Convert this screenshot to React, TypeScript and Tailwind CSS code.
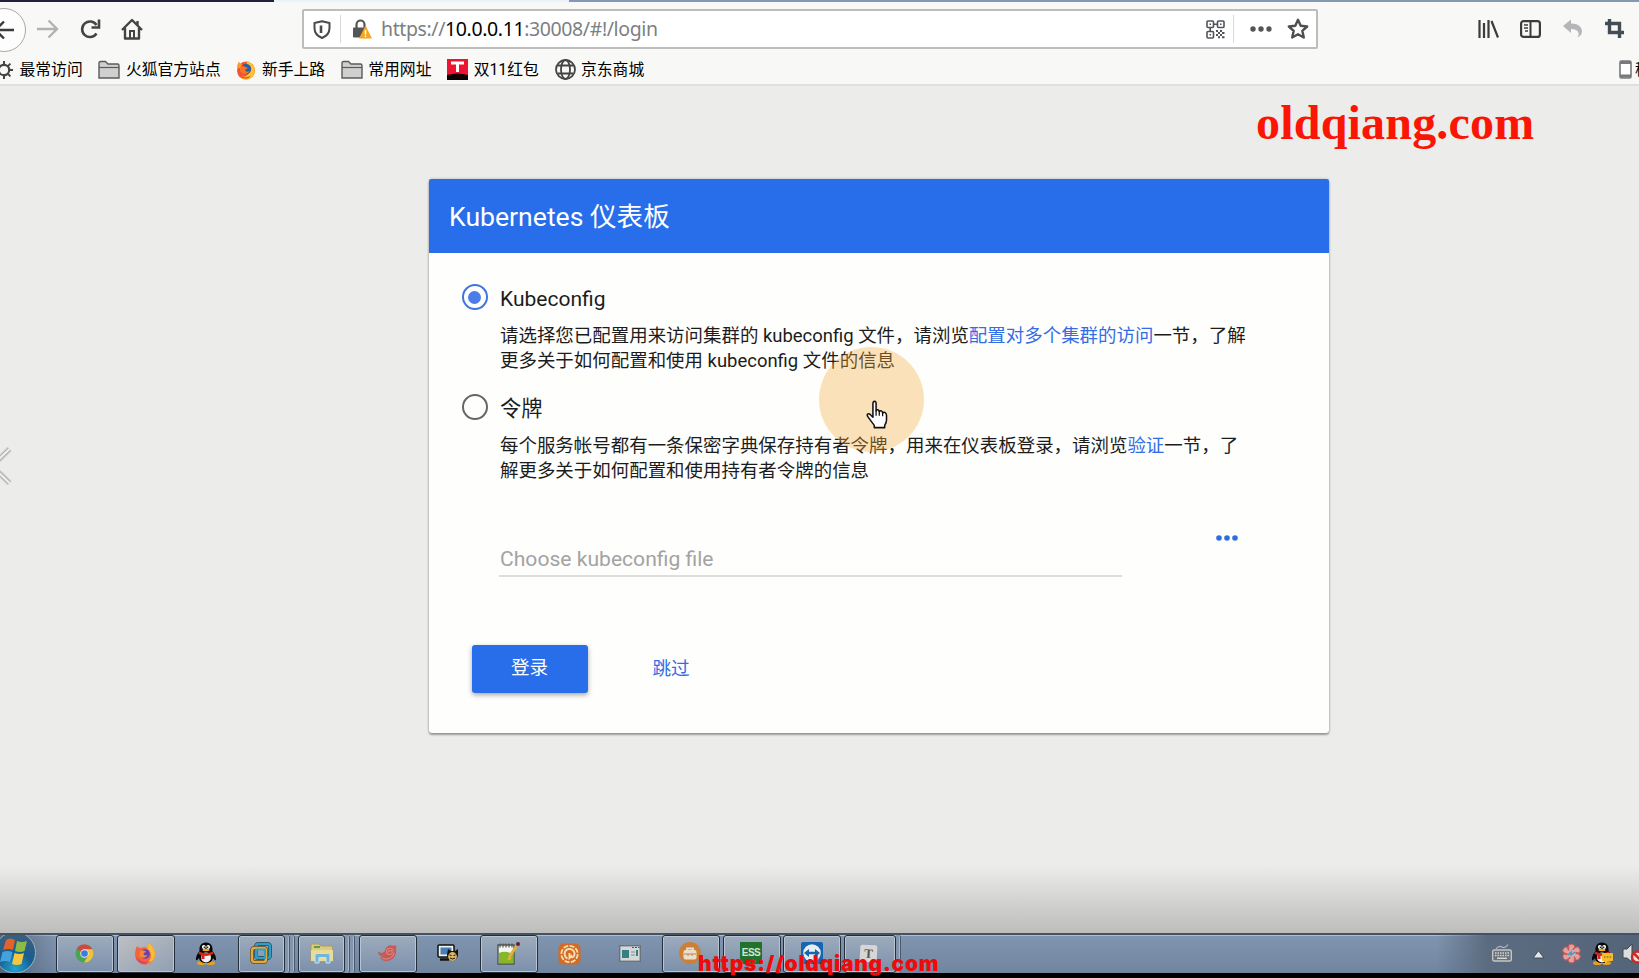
import { ReactNode } from "react";

const Folder = () => (
  <svg width="22" height="20" viewBox="0 0 22 20">
    <path
      d="M1 18V3q0-1.500 1.500-1.500H7.500L10 4H19.500Q21 4 21 5.500V18Z"
      fill="#cfcfcf"
      stroke="#5b5b5b"
      strokeWidth="1.400"
    />
    <path d="M1 7.500H21" stroke="#5b5b5b" strokeWidth="1.200" />
  </svg>
);

const Gear = () => (
  <svg width="20" height="20" viewBox="0 0 20 20" fill="none" stroke="#444">
    <circle cx="10" cy="10" r="5.200" strokeWidth="2.200" />
    <path
      d="M10 1v4M10 15v4M1 10h4M15 10h4M3.600 3.600l3 3M13.400 13.400l3 3M3.600 16.400l3-3M13.400 6.600l3-3"
      strokeWidth="2"
    />
  </svg>
);

const Firefox = () => (
  <svg width="20" height="20" viewBox="0 0 20 20">
    <circle cx="10" cy="10.500" r="9" fill="#f6532b" />
    <path
      d="M12 .5c1 2 4 2.500 6 6 2 5 0 10-4.500 12.500C9 20.500 4 19 2 15c4 3 9 2 11-2 1.500-4-.5-6-2-7.500C10.500 3.500 11 1.500 12 .5Z"
      fill="#ffc32b"
    />
    <path d="M1 8c0-3 1-5 2-6.500C3.500 3 4.500 4 6 4.500L5 8Z" fill="#ff9a28" />
    <circle cx="10" cy="9" r="5.200" fill="#2a5ea8" />
    <path d="M4 7c2-1.500 4-1 5.500 0L12 8l-2.500 1.500c-1 2 1.500 3 4 1.500-1.500 4-8 4-9.500-.5Z" fill="#fb7329" />
    <path d="M2 15c3 4 9 5 13 1-4 2-9 2-13-1Z" fill="#e52a55" />
  </svg>
);

const Tmall = () => (
  <svg width="21" height="21" viewBox="0 0 21 21">
    <path d="M0 0H21V21H0Z" fill="#ee1431" />
    <path d="M0 16Q10 13 21 16V21H0Z" fill="#0c0000" />
    <path d="M4 2.500H17V5.500H12V13H9V5.500H4Z" fill="#fff" />
  </svg>
);

const Globe = () => (
  <svg width="21" height="21" viewBox="0 0 21 21" fill="none" stroke="#444" strokeWidth="1.800">
    <circle cx="10.500" cy="10.500" r="9.500" />
    <ellipse cx="10.500" cy="10.500" rx="4.500" ry="9.500" />
    <path d="M2.500 6.500H18.500M2.500 14.500H18.500" />
  </svg>
);

const bookmarks: { icon: ReactNode; label: string }[] = [
  { icon: <Gear />, label: "最常访问" },
  { icon: <Folder />, label: "火狐官方站点" },
  { icon: <Firefox />, label: "新手上路" },
  { icon: <Folder />, label: "常用网址" },
  { icon: <Tmall />, label: "双11红包" },
  { icon: <Globe />, label: "京东商城" },
];

const QrCode = () => (
  <svg width="19" height="19" viewBox="0 0 19 19" fill="none" stroke="#50545a" strokeWidth="1.600">
    <rect x="1" y="1" width="6.500" height="6.500" rx="1" />
    <rect x="11.500" y="1" width="6.500" height="6.500" rx="1" />
    <rect x="1" y="11.500" width="6.500" height="6.500" rx="1" />
    <path d="M3.500 4.200h1.500M14 4.200h1.500M3.500 14.700h1.500M7.500 4.200h4M4.200 7.500v4" />
    <path d="M10 11h2m2 0h2M12 13h2m2 0h2.500M10 15h2m2 0h2M12 17.200h2m2 0h2.500" strokeWidth="2" />
  </svg>
);

function Toolbar() {
  return (
    <div className="flex h-[52px] items-center">
      <div className="-ml-[18px] mt-[3px] flex h-[44px] w-[44px] shrink-0 items-center justify-center rounded-full border border-[#a9a9a9] bg-[#fdfdfd]">
        <svg width="21" height="20" viewBox="0 0 21 20" fill="none" stroke="#3a3a3a" strokeWidth="2.400">
          <path d="M20 10H2M10 1.500L1.500 10l8.500 8.500" />
        </svg>
      </div>
      <svg className="ml-[11px] mt-[2px]" width="22" height="20" viewBox="0 0 22 20" fill="none" stroke="#b2b2b2" strokeWidth="2.400">
        <path d="M0 10H20M11.500 1.500L20 10l-8.500 8.500" />
      </svg>
      <svg className="ml-[21px] mt-[2px]" width="21" height="20" viewBox="0 0 21 20" fill="none" stroke="#444" strokeWidth="2.600">
        <path d="M16.500 14.500a7.800 7.800 0 1 1 0-8.500" />
        <path d="M19 .5V8.500H11.500" />
      </svg>
      <svg className="ml-[20px] mt-px" width="22" height="22" viewBox="0 0 22 22" fill="none" stroke="#444" strokeWidth="2.400">
        <path d="M1 12L11 2l10 10M4 10v10.500H18V10M16.500 3v4" strokeLinejoin="round" />
        <path d="M9 20v-7h4v7" strokeWidth="2" />
      </svg>

      <div className="ml-[159px] mt-[2px] flex h-10 w-[1016px] shrink-0 items-center rounded-[2px] border-2 border-[#bdbdbc] bg-white">
        <svg className="ml-[9px]" width="18" height="19" viewBox="0 0 18 19" fill="none" stroke="#4a4a4a">
          <path d="M9 1.200L16.500 3V8q0 7-7.500 10Q1.500 15 1.500 8V3Z" strokeWidth="2" strokeLinejoin="round" />
          <path d="M8 5.500V13" strokeWidth="2.600" />
        </svg>
        <div className="ml-[9px] h-7 w-px bg-[#d8d8d8]" />
        <svg className="ml-[12px]" width="19" height="20" viewBox="0 0 19 20">
          <path d="M3.500 9V5.500a4 4 0 0 1 8 0V9" fill="none" stroke="#555" strokeWidth="2.200" />
          <rect x="0" y="8.500" width="14" height="10" rx="1" fill="#555" />
          <path d="M12.500 6.500L19 19.500H6Z" fill="#f8a51b" />
          <path d="M12.500 11v4.500M12.500 16.500v1.500" stroke="#fff" strokeWidth="1.500" />
        </svg>
        <div className="ml-[9px] w-[781px] whitespace-nowrap font-['Noto_Sans',sans-serif] text-[19.500px] leading-[30px] tracking-[-0.390px] text-[#7d7f83]">
          https://<span className="text-black">10.0.0.11</span>:30008/#!/login
        </div>
        <div className="ml-[44px]">
          <QrCode />
        </div>
        <div className="ml-[8px] h-7 w-px bg-[#d8d8d8]" />
        <svg className="ml-4" width="22" height="6" viewBox="0 0 22 6" fill="#555">
          <circle cx="3" cy="3" r="2.700" />
          <circle cx="11" cy="3" r="2.700" />
          <circle cx="19" cy="3" r="2.700" />
        </svg>
        <svg className="ml-[15px]" width="22" height="22" viewBox="0 0 22 22" fill="none" stroke="#4f4f4f" strokeWidth="2.400" strokeLinejoin="round">
          <path d="M11 1.800l2.700 6 6.500.7-4.900 4.300 1.500 6.700L11 16.200l-5.800 3.300 1.500-6.700L1.800 8.500l6.500-.7Z" />
        </svg>
      </div>

      <div className="ml-[160px] mt-px flex shrink-0 items-center">
        <svg width="21" height="18" viewBox="0 0 21 18" stroke="#3c3c3c" strokeWidth="2.200">
          <path d="M1.500 0V18M6 3V18M10.500 0V18M13.500 1L20 17.500" />
        </svg>
        <svg className="ml-[21px]" width="21" height="18" viewBox="0 0 21 18" fill="none" stroke="#3c3c3c">
          <rect x="1.100" y="1.100" width="18.800" height="15.800" rx="2.500" strokeWidth="2.200" />
          <path d="M10.500 1V17" strokeWidth="2" />
          <path d="M4 5h4M4 8h4M5 11h3" strokeWidth="1.300" />
        </svg>
        <svg className="ml-[22px]" width="20" height="19" viewBox="0 0 20 19" fill="#b5b6b8">
          <path d="M0 7L8 .5V4.500C15 4.500 19 8 19 12.500c0 3-2 5-5 6 1.500-1 2-3 1.500-4.500C14.500 11 12 10 8 10v4Z" />
        </svg>
        <svg className="ml-[22px]" width="19" height="19" viewBox="0 0 19 19" fill="none" stroke="#444c55" strokeWidth="3.400">
          <path d="M0 4.500H14.500V19M4.500 0V13.500H19" />
        </svg>
      </div>
    </div>
  );
}

function BookmarkBar() {
  return (
    <div className="flex h-[30px] items-center whitespace-nowrap pt-px text-[15.800px] leading-5 text-black">
      <div className="-ml-[6px] flex items-center gap-[15.700px]">
        {bookmarks.map((item) => (
          <div className="flex items-center gap-[5.500px]" key={item.label}>
            {item.icon}
            <span>{item.label}</span>
          </div>
        ))}
      </div>
      <div className="ml-auto flex w-[20px] shrink-0 items-center gap-[3px] overflow-hidden">
        <svg className="shrink-0" width="13" height="19" viewBox="0 0 13 19">
          <rect x="1" y="1" width="11" height="17" rx="1.500" fill="#fff" stroke="#77797c" strokeWidth="1.600" />
          <path d="M1 2.500H12M1 16H12" stroke="#77797c" strokeWidth="2.800" />
        </svg>
        <span>移动设备</span>
      </div>
    </div>
  );
}

function Radio({ checked }: { checked?: boolean }) {
  return checked ? (
    <div className="flex h-[26px] w-[26px] shrink-0 items-center justify-center rounded-full border-[2.500px] border-[#3f75df]">
      <div className="h-[13px] w-[13px] rounded-full bg-[#4a7dea]" />
    </div>
  ) : (
    <div className="h-[26px] w-[26px] shrink-0 rounded-full border-[2.500px] border-[#666]" />
  );
}

function LoginCard() {
  return (
    <div className="mx-auto h-[554px] w-[900px] translate-x-[59px] rounded-[3px] bg-[#fefefd] shadow-[0_2px_2px_0_rgba(0,0,0,0.3),0_0_3px_0_rgba(0,0,0,0.25)]">
      <div className="flex h-[74px] items-center rounded-t-[2px] bg-[#286de9] pl-[20.500px] pt-px text-[26.600px] leading-8 text-white">
        Kubernetes 仪表板
      </div>
      <div className="pl-[33px] pt-[31px] text-[#1c1c1c]">
        <div className="flex gap-[12.500px]">
          <Radio checked />
          <div className="w-[755px]">
            <div className="pt-px text-[21px] leading-7">Kubeconfig</div>
            <div className="mt-[11px] whitespace-nowrap text-[18.470px] leading-[25px]">
              请选择您已配置用来访问集群的 kubeconfig 文件，请浏览
              <a className="text-[#326de6]">配置对多个集群的访问</a>一节，了解
              <br />
              更多关于如何配置和使用 kubeconfig 文件的信息
            </div>
          </div>
        </div>
        <div className="mt-[20px] flex gap-[12.500px]">
          <Radio />
          <div className="w-[755px]">
            <div className="pt-px text-[21.200px] leading-7">令牌</div>
            <div className="mt-[11px] whitespace-nowrap text-[18.470px] leading-[25px]">
              每个服务帐号都有一条保密字典保存持有者令牌，用来在仪表板登录，请浏览
              <a className="text-[#326de6]">验证</a>一节，了
              <br />
              解更多关于如何配置和使用持有者令牌的信息
            </div>
          </div>
        </div>
        <div className="ml-[37px] mt-[46px] flex">
          <div className="mt-[5px] flex h-[42px] w-[623px] items-end border-b-2 border-[#dedede] pb-[2px] pl-[1.500px] text-[21.100px] leading-7 text-[#a3a3a3]">
            Choose kubeconfig file
          </div>
          <svg className="ml-[94px] mt-[5px]" width="22" height="6" viewBox="0 0 22 6" fill="#2f6de2">
            <circle cx="3" cy="3" r="2.800" />
            <circle cx="11" cy="3" r="2.800" />
            <circle cx="19" cy="3" r="2.800" />
          </svg>
        </div>
        <div className="ml-[10px] mt-[68px] flex items-center text-[18.600px] leading-6">
          <button className="h-12 w-[116px] rounded-[3px] bg-[#286de9] pb-[2px] text-white shadow-[0_2px_5px_0_rgba(0,0,0,0.35)]">
            登录
          </button>
          <button className="ml-[65px] pb-px text-[#326de6]">跳过</button>
        </div>
      </div>
    </div>
  );
}

const Penguin = ({ chat }: { chat?: boolean }) => (
  <svg width="22" height="23" viewBox="0 0 22 23">
    <ellipse cx="6.500" cy="21" rx="4.500" ry="2" fill="#e8a020" />
    <ellipse cx="15.500" cy="21" rx="4.500" ry="2" fill="#e8a020" />
    <path d="M11 .5c5 0 7 4 6.500 8.500 2 2.500 4 6 3.500 9-1 1-2-1-3-2-.5 3-3 5-7 5s-6.500-2-7-5c-1 1-2 3-3 2C.5 15 2.500 11.500 4.500 9 4 4.500 6 .5 11 .5Z" fill="#080808" />
    <ellipse cx="11" cy="15.500" rx="5" ry="5" fill="#f3f3f3" />
    <circle cx="8.800" cy="5" r="1.900" fill="#fff" />
    <circle cx="13.200" cy="5" r="1.900" fill="#fff" />
    <circle cx="9.300" cy="5.200" r=".8" />
    <circle cx="12.700" cy="5.200" r=".8" />
    <ellipse cx="11" cy="8" rx="3.500" ry="1.200" fill="#f0a818" />
    <path d="M4 9.500Q11 13 18 9.500L18.500 12Q11 15 9.500 13.500V17H6.500V13L3.500 12Z" fill="#d9231d" />
    {chat && (
      <>
        <rect x="11" y="11" width="11" height="8" rx="1" fill="#f5bd2a" />
        <path d="M13 15h1.500M15.800 15h1.500M18.500 15H20" stroke="#7a5200" />
        <path d="M14 19v3l3-3" fill="#f5bd2a" />
      </>
    )}
  </svg>
);

const Chrome = () => (
  <svg width="19" height="19" viewBox="0 0 20 20">
    <circle cx="10" cy="10" r="9.500" fill="#4aa455" />
    <path d="M10 10L1.700 5.200A9.500 9.500 0 0 1 18.300 5.500L10 5.500Z" fill="#d0493c" />
    <path d="M10 5.500H18.300A9.500 9.500 0 0 1 9.500 19.500L14 12Z" fill="#efc23b" />
    <circle cx="10" cy="10" r="4.500" fill="#ece9e4" />
    <circle cx="10" cy="10" r="3.500" fill="#3a7be0" />
  </svg>
);

// taskbar variant, rounder and with a violet centre
const FirefoxNew = () => (
  <svg width="22" height="23" viewBox="0 0 22 23">
    <path d="M3 4c1 1 2 2 4 2 2-1 5-1 6 0L15 .5c2 3 6 5 6 12A10 10 0 0 1 1 13C1 9 2 6 3 4Z" fill="#f4633a" />
    <path d="M13 6l2-5.500c2 3 6 5 6 12 0 5-4 9-9 9.500 4-3 6-7 4.500-11C16 8.500 14 8 13 6Z" fill="#f7bd35" />
    <path d="M2 15c2 7 10 9 15 4-4 2-11 1-15-4Z" fill="#d94268" />
    <circle cx="11" cy="12" r="4.800" fill="#6545b5" />
    <path d="M6 9c3-1.500 4 0 6 .5l-2.500 2c0 2 2 2.500 4 1.500-1 3-6 4-8 1Z" fill="#f58a36" />
  </svg>
);

const Vmware = () => (
  <svg width="22" height="22" viewBox="0 0 22 22" fill="none" strokeLinejoin="round">
    <rect x="6" y="2" width="14" height="14" rx="2.500" stroke="#26475a" strokeWidth="4" />
    <rect x="6" y="2" width="14" height="14" rx="2.500" stroke="#319fc4" strokeWidth="2.600" />
    <rect x="2" y="6" width="14" height="14" rx="2.500" stroke="#5a4524" strokeWidth="4" />
    <rect x="2" y="6" width="14" height="14" rx="2.500" stroke="#e5a83a" strokeWidth="2.600" />
    <path d="M6.500 7.500V16H15V7.500Z" stroke="#319fc4" strokeWidth="2" />
  </svg>
);

const Explorer = () => (
  <svg width="24" height="21" viewBox="0 0 24 21">
    <path d="M1 2Q1 1 2 1H9l2 2H21q1.500 0 1.500 1.500V18H1Z" fill="#dccb7c" stroke="#a99d65" />
    <path d="M1 7H23V18H1Z" fill="#e9dc98" />
    <rect x="4" y="3" width="6" height="2" fill="#609b49" />
    <path d="M5 20V12Q5 10.500 7 10.500H18Q20 10.500 20 12V20H16V14.500H9V20Z" fill="#72b6da" stroke="#c9e2ee" />
  </svg>
);

const Shell = () => (
  <svg width="21" height="18" viewBox="0 0 22 19">
    <path d="M1 8c3 2 5 2 7 0C9 3 13 0 17 2c3-1 4-.5 3 2 1 7-2 13-9 14-4 .5-7-1-8-4h4C4 13 1 12 1 8Z" fill="#c65a55" />
    <path d="M18 7c-2-4-8-3-8 1s6 4 6 1-4-2-4-.5M5 15c6 2 12 0 13-6" fill="none" stroke="#d98580" strokeWidth="1.200" />
  </svg>
);

const Remote = () => (
  <svg width="22" height="19" viewBox="0 0 22 19">
    <rect x="1" y="1" width="16" height="12" rx="1" fill="#f0f2ef" stroke="#111" strokeWidth="1.500" />
    <rect x="3.500" y="3.500" width="11" height="7" fill="#4680b7" />
    <path d="M3 15.500H12" stroke="#111" strokeWidth="2.500" />
    <path d="M10 11l1-6 3 2h4l3-2v6a5.500 5.500 0 1 1-11 0Z" fill="#181104" />
    <circle cx="15.500" cy="12.500" r="4.400" fill="#d9b565" />
    <path d="M12.500 11l2 .5M18.500 11l-2 .5M13 14q2.500 2 5 0" stroke="#181104" fill="none" />
  </svg>
);

const Notepad = () => (
  <svg width="23" height="23" viewBox="0 0 23 23">
    <path d="M1 3H17V22H1Z" fill="#f5f5ef" stroke="#4c5651" strokeWidth="1.400" />
    <path d="M2 11Q8 8 16 12V21H2Z" fill="#85b826" />
    <path d="M3 1.500v4M6 1.500v4M9 1.500v4M12 1.500v4M15 1.500v4" stroke="#555" strokeWidth="1.200" />
    <path d="M12 18l1-4L19.500 4" stroke="#ddb13a" strokeWidth="3" fill="none" />
    <circle cx="21" cy="2" r="2" fill="#6b1f22" />
  </svg>
);

const OrangeRing = () => (
  <svg width="23" height="22" viewBox="0 0 23 22" fill="none">
    <rect x=".5" y=".5" width="22" height="21" rx="5" fill="#d66a22" />
    <circle cx="11.500" cy="11" r="8.200" stroke="#f3dfb3" strokeWidth="1.800" strokeDasharray="5 1.400" />
    <path d="M9.500 15.500A5 5 0 1 1 15.500 14M11.500 10v5l2-2 1.500 2" stroke="#f3dfb3" strokeWidth="2" />
  </svg>
);

const AppWindow = () => (
  <svg width="22" height="17" viewBox="0 0 22 17">
    <rect x=".7" y=".7" width="20.600" height="15.600" fill="#d5d8d8" stroke="#6d7478" strokeWidth="1.400" />
    <path d="M13 2.500h2M16 2.500h2M19 2.500h1.500" stroke="#555" strokeWidth="1.200" />
    <rect x="3" y="5" width="7" height="8" fill="#368083" />
    <path d="M12 7h4M12 10h4" stroke="#888" />
    <path d="M18 5v6" stroke="#368083" strokeWidth="2" />
  </svg>
);

const Briefcase = () => (
  <svg width="22" height="22" viewBox="0 0 22 22">
    <circle cx="11" cy="11" r="11" fill="#cc8037" />
    <path d="M8 8.500V6.500H14V8.500" fill="none" stroke="#eadfce" strokeWidth="1.800" />
    <rect x="4.500" y="8" width="13" height="9.500" rx="2" fill="#eadfce" />
    <path d="M5 12H17M9 12v2M13 12v2" stroke="#cc8037" />
  </svg>
);

const Ess = () => (
  <div className="flex h-[22px] w-[22px] items-center justify-center bg-[#23722c] font-['Liberation_Sans',sans-serif] text-[10px] font-bold leading-none tracking-[-0.500px] text-[#d7e3d4]">
    ESS
  </div>
);

const TeamViewer = () => (
  <svg width="22" height="22" viewBox="0 0 22 22">
    <rect width="22" height="22" rx="2" fill="#1565b0" />
    <circle cx="11" cy="11" r="8.800" fill="#e9edf0" />
    <path d="M3 11l5-4v2.700h6V7l5 4-5 4v-2.700H8V15Z" fill="#1565b0" />
  </svg>
);

const Typora = () => (
  <div className="flex h-[17px] w-[17px] rotate-3 items-center justify-center rounded-[2px] bg-[#d6d6d6] font-['Liberation_Serif',serif] text-[13px] font-bold leading-none text-[#555]">
    T
  </div>
);

// open: has a window frame, stack: number of extra windows behind it
const tasks: { name: string; icon: ReactNode; open?: boolean; stack?: number; active?: boolean }[] = [
  { name: "chrome", icon: <Chrome />, open: true },
  { name: "firefox", icon: <FirefoxNew />, open: true, active: true },
  { name: "qq", icon: <Penguin /> },
  { name: "vmware", icon: <Vmware />, open: true, stack: 2 },
  { name: "explorer", icon: <Explorer />, open: true, stack: 2 },
  { name: "xshell", icon: <Shell />, open: true },
  { name: "remote", icon: <Remote /> },
  { name: "notepad", icon: <Notepad />, open: true },
  { name: "recorder", icon: <OrangeRing /> },
  { name: "window", icon: <AppWindow /> },
  { name: "briefcase", icon: <Briefcase />, open: true },
  { name: "ess", icon: <Ess />, open: true },
  { name: "teamviewer", icon: <TeamViewer />, open: true },
  { name: "typora", icon: <Typora />, open: true, stack: 1 },
];

function TaskButton({ task }: { task: (typeof tasks)[number] }) {
  if (!task.open) {
    return (
      <div className="flex h-full w-[60.600px] shrink-0 items-center justify-center pb-px pr-[3px]">{task.icon}</div>
    );
  }
  const stack = task.stack ?? 0;
  return (
    <div className="flex h-full w-[60.600px] shrink-0">
      <div
        className={`flex h-full items-center justify-center rounded-[3px] border border-[#252e3b] pb-[2px] ring-1 ring-inset ring-[#b8c4d0] ${
          stack === 2 ? "w-[47px]" : stack === 1 ? "w-[52px] pr-[2px]" : "w-[58px] pr-px"
        } ${
          task.active
            ? "bg-linear-to-br from-[#bfc0c2] to-[#8f9fb3]"
            : "bg-linear-to-b from-[#9dabbc] to-[#7c90ab]"
        }`}
      >
        {task.icon}
      </div>
      {Array.from({ length: stack }).map((_, i) => (
        <div
          key={i}
          className="h-full w-[5px] rounded-r-[3px] border-r border-[#4a586b] bg-[#8395ad] shadow-[inset_-1px_0_0_#a9b8c9]"
        />
      ))}
    </div>
  );
}

function StartOrb() {
  return (
    <svg className="-ml-[4px] shrink-0" width="40" height="39" viewBox="0 0 40 39">
      <defs>
        <radialGradient id="orb" cx="50%" cy="90%" r="85%">
          <stop offset="0" stopColor="#22a5d0" />
          <stop offset="0.500" stopColor="#175e91" />
          <stop offset="1" stopColor="#3d5f7c" />
        </radialGradient>
      </defs>
      <circle cx="19" cy="17.500" r="20.500" fill="url(#orb)" stroke="#93b4c9" />
      <path d="M10 5q4-3 9 0L17 15q-5-2-10 0Z" fill="#e2622b" />
      <path d="M21 6q5 2 10 0L28.500 16q-4.500 2-9.500 0Z" fill="#8dbb43" />
      <path d="M6.500 17q5-2 10 0L14 27q-5-2-10 0Z" fill="#43a2dc" />
      <path d="M18.500 18q5 2 9.500 0L25.500 29q-5 2-9.500 0Z" fill="#f5c642" />
    </svg>
  );
}

function Taskbar() {
  return (
    <div className="flex h-10 shrink-0 items-stretch border-t-2 border-[#465264] bg-linear-to-b from-[#8095b0] to-[#71859f] shadow-[inset_0_1px_0_#aebccc]">
      <div className="flex w-[56px] shrink-0 bg-linear-to-r from-[#53647b] to-[#8094ad00]">
        <StartOrb />
      </div>
      {tasks.map((task) => (
        <TaskButton task={task} key={task.name} />
      ))}
      <div className="ml-auto flex w-[203px] items-center overflow-hidden bg-linear-to-r from-[#54667b00] via-[#5b6c80] via-25% to-[#556579] pb-[2px] pl-[56px]">
        <svg className="shrink-0" width="20" height="18" viewBox="0 0 20 18">
          <path d="M4 5Q7 1 10 3t6-2.500" fill="none" stroke="#b5b8ba" strokeWidth="1.200" />
          <rect x=".7" y="6" width="18.600" height="11" rx="1.500" fill="#69727a" stroke="#c4c5c3" strokeWidth="1.400" />
          <path d="M3 9H17M3 11.500H17" stroke="#d5d6d4" strokeWidth="1.500" strokeDasharray="1.500 1" />
          <path d="M5 14.300H15" stroke="#d5d6d4" strokeWidth="1.500" />
        </svg>
        <svg className="ml-[20px] mt-[2px] shrink-0" width="13" height="9" viewBox="0 0 13 9">
          <path d="M6.500 .8L12 8H1Z" fill="#e3e7ea" stroke="#3e4b5a" />
        </svg>
        <svg className="ml-[16px] shrink-0" width="21" height="21" viewBox="0 0 21 21" fill="#e0a19f" stroke="#c95653">
          {[0, 60, 120, 180, 240, 300].map((deg) => (
            <path key={deg} d="M10 10Q6 6 8 1.500Q13 0 14 4Q12 5 10 10Z" transform={`rotate(${deg} 10.500 10.500)`} />
          ))}
          <circle cx="10.500" cy="10.500" r="4" fill="#d5a9ae" stroke="none" />
          <path d="M7 12l3-3v3l4-3" fill="none" stroke="#4f93bd" strokeWidth="1.500" />
        </svg>
        <div className="ml-[9px] shrink-0">
          <Penguin chat />
        </div>
        <svg className="ml-[9px] shrink-0" width="22" height="21" viewBox="0 0 22 21">
          <path d="M1 6H5L10 1V19L5 15H1Z" fill="#dcdfe0" stroke="#444" />
          <circle cx="15.500" cy="14" r="5.500" fill="#f1dad8" stroke="#c72d28" strokeWidth="2.500" />
          <path d="M11.500 10l8 8" stroke="#c72d28" strokeWidth="2.500" />
        </svg>
      </div>
    </div>
  );
}

const HandPointer = () => (
  <svg className="absolute left-[865px] top-[400px]" width="24" height="29" viewBox="0 0 25 32">
    <path
      d="M8 19V4Q8 1.500 9.800 1.500T11.500 4V12Q12 10.500 13.500 10.800T15 13Q16 11.500 17.300 12T18.700 14.500Q20 13 21.500 14T23 17V22Q23 25 21 28V30.500H9.500V28L3.500 20Q1 17 2 15.800T5 16Z"
      fill="#fff"
      stroke="#111"
      strokeWidth="1.700"
      strokeLinejoin="round"
    />
    <path d="M11.500 11.500v6M15 12.500v5M18.700 14v4" stroke="#111" strokeWidth="1.400" />
  </svg>
);

export default function App() {
  return (
    <div className="relative flex h-[978px] w-[1639px] flex-col overflow-hidden bg-[#ececeb] font-['Roboto','Noto_Sans_CJK_SC',sans-serif]">
      <div className="flex h-[2px] shrink-0">
        <div className="w-[274px] bg-[#20213a]" />
        <div className="w-[295px] bg-[#eaf2fa]" />
        <div className="flex-1 bg-[#8299b3]" />
      </div>
      <div className="h-[84px] shrink-0 border-b-2 border-[#dfdfdd] bg-[#f8f8f7]">
        <Toolbar />
        <BookmarkBar />
      </div>

      <div className="flex flex-1 flex-col pt-[93px]">
        <LoginCard />
        <div className="mt-auto h-[68px] bg-linear-to-b from-[#ececeb] to-[#bdbdbc]" />
      </div>

      <Taskbar />
      <div className="h-[5px] shrink-0 bg-black" />

      {/* previous arrow on the left edge */}
      <svg className="absolute left-0 top-[442px]" width="16" height="48" viewBox="0 0 16 48" fill="none">
        <path d="M9.500 7L-8 24L9.500 41" stroke="#d2d2d1" strokeWidth="6" />
        <path d="M9.500 7L-8 24L9.500 41" stroke="#b0b0af" strokeWidth="4" />
        <path d="M9.500 7L-8 24L9.500 41" stroke="#f1f1f0" strokeWidth="2" />
      </svg>

      {/* click highlight and cursor */}
      <div className="absolute left-[818.500px] top-[347px] h-[105px] w-[105px] rounded-full bg-[#f6ac3a]/35" />
      <HandPointer />

      {/* watermarks */}
      <div className="absolute left-[1256px] top-[95px] whitespace-nowrap font-['Liberation_Serif',serif] text-[48px] font-bold leading-[56px] tracking-[0.200px] text-[#fb1505]">
        oldqiang.com
      </div>
      <div className="absolute left-[698px] top-[951px] whitespace-nowrap font-['Inter',sans-serif] text-[21px] font-black leading-[26px] tracking-[0.750px] text-[#f10a0a]">
        https://oldqiang.com
      </div>
    </div>
  );
}
